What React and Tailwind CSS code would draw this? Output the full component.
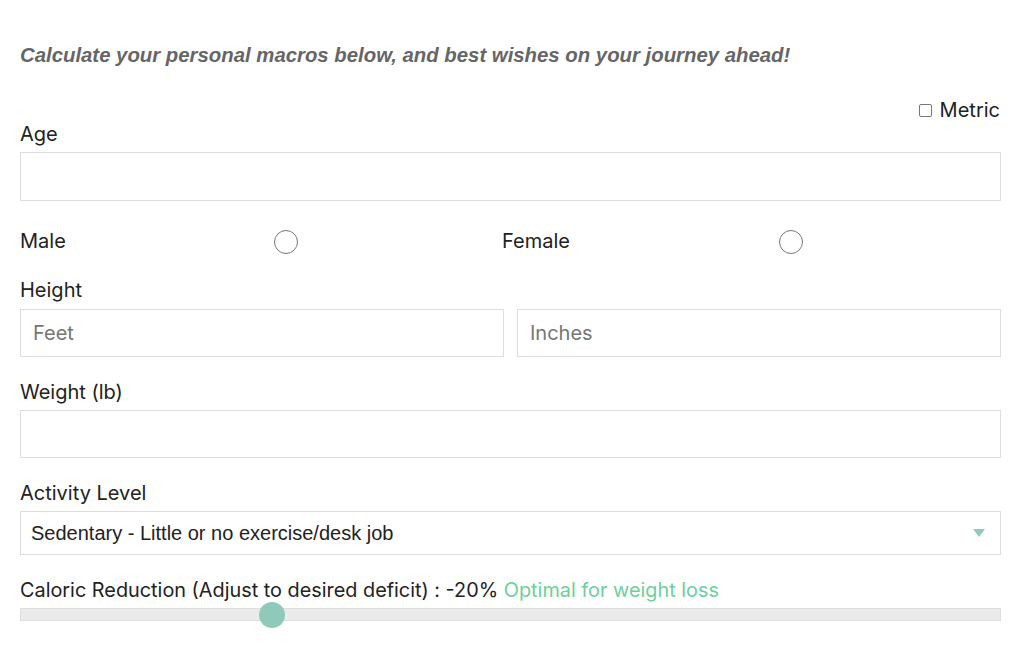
export default function App() {
  const inter = { fontFamily: "Inter, 'Noto Sans', sans-serif" };
  return (
    <div className="w-[1019px] h-[658px] bg-white overflow-hidden text-[#222]" style={inter}>
      <div className="px-[20px] pt-[42px] w-[1021px]">
        <p className="text-[20.35px] leading-[26px] font-bold italic text-[#666]" style={{ fontFamily: "'Liberation Sans', Arial, sans-serif" }}>
          Calculate your personal macros below, and best wishes on your journey ahead!
        </p>
        <div className="flex justify-end items-center mt-[29px] h-[26px] pr-[1px]">
          <span className="w-[13px] h-[13px] border border-[#767676] rounded-[2px] mr-[8px] bg-white"></span>
          <span className="text-[20px] leading-[26px]">Metric</span>
        </div>
        <div className="text-[20px] leading-[26px] mt-[-2px]">Age</div>
        <div className="mt-[5px] h-[49px] border border-[#ddd] bg-white"></div>
        <div className="flex items-center mt-[27px] h-[26px]">
          <div className="w-[482px] flex items-center">
            <span className="text-[20px] leading-[26px] w-[254px]">Male</span>
            <span className="w-[24px] h-[24px] rounded-full border border-[#767676] translate-y-[1px]"></span>
          </div>
          <div className="flex items-center">
            <span className="text-[20px] leading-[26px] w-[277px]">Female</span>
            <span className="w-[24px] h-[24px] rounded-full border border-[#767676] translate-y-[1px]"></span>
          </div>
        </div>
        <div className="text-[20px] leading-[26px] mt-[23px]">Height</div>
        <div className="flex gap-[13px] mt-[6px]">
          <div className="flex-1 h-[48px] border border-[#ddd] flex items-center px-[12px] text-[20px] text-[#757575]">Feet</div>
          <div className="flex-1 h-[48px] border border-[#ddd] flex items-center px-[12px] text-[20px] text-[#757575]">Inches</div>
        </div>
        <div className="text-[20px] leading-[26px] mt-[22px]">Weight (lb)</div>
        <div className="mt-[5px] h-[48px] border border-[#ddd]"></div>
        <div className="text-[20px] leading-[26px] mt-[22px]">Activity Level</div>
        <div className="mt-[5px] h-[44px] border border-[#ddd] flex items-center justify-between pl-[10px] pr-[15px]">
          <span className="text-[20px] text-[#222]" style={{ fontFamily: "'Liberation Sans', Arial, sans-serif" }}>Sedentary - Little or no exercise/desk job</span>
          <svg width="12" height="10" viewBox="0 0 12 10"><polygon points="0,1 12,1 6,9" fill="#8fcbbd" /></svg>
        </div>
        <div className="text-[19.85px] leading-[26px] mt-[22px]">
          Caloric Reduction (Adjust to desired deficit) : -20% <span className="text-[#6fcf9c]">Optimal for weight loss</span>
        </div>
        <div className="relative mt-[5px] h-[13px] border border-[#ddd] bg-[#ebebeb]">
          <span className="absolute left-[238px] top-[-7px] w-[26px] h-[26px] rounded-full bg-[#8fc9b9]"></span>
        </div>
      </div>
    </div>
  );
}
